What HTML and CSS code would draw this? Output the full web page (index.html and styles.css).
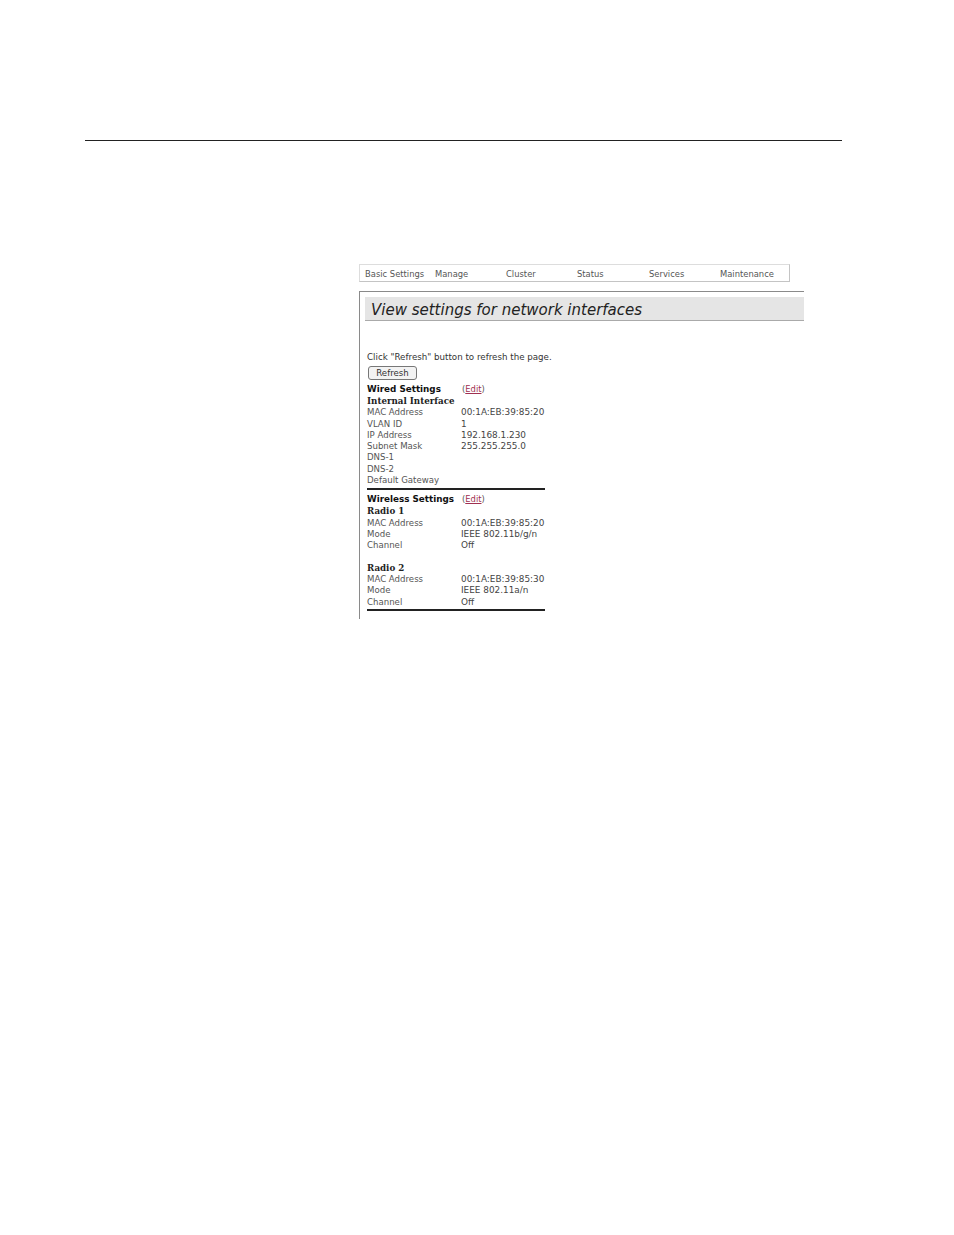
FILE: index.html
```html
<!DOCTYPE html>
<html lang="en">
<head>
<meta charset="utf-8">
<title>View settings for network interfaces</title>
<link rel="stylesheet" href="styles.css">
</head>
<body>
<div class="page">
  <hr class="rule">
  <div class="figure">
    <nav class="nav">
      <span class="nav-item w70">Basic Settings</span>
      <span class="nav-item w71">Manage</span>
      <span class="nav-item w71">Cluster</span>
      <span class="nav-item w72">Status</span>
      <span class="nav-item w71">Services</span>
      <span class="nav-item">Maintenance</span>
    </nav>
    <section class="panel">
      <h1 class="title">View settings for network interfaces</h1>
      <p class="hint">Click "Refresh" button to refresh the page.</p>
      <button class="btn" type="button">Refresh</button>
      <div class="block wired">
        <div class="row head"><b class="h">Wired Settings</b><span class="edit">(<a>Edit</a>)</span></div>
        <div class="row"><b class="sub">Internal Interface</b></div>
        <div class="row"><span>MAC Address</span><span>00:1A:EB:39:85:20</span></div>
        <div class="row"><span>VLAN ID</span><span>1</span></div>
        <div class="row"><span>IP Address</span><span>192.168.1.230</span></div>
        <div class="row"><span>Subnet Mask</span><span>255.255.255.0</span></div>
        <div class="row"><span>DNS-1</span></div>
        <div class="row"><span>DNS-2</span></div>
        <div class="row"><span>Default Gateway</span></div>
      </div>
      <div class="block wireless">
        <div class="row head"><b class="h">Wireless Settings</b><span class="edit">(<a>Edit</a>)</span></div>
        <div class="row"><b class="sub">Radio 1</b></div>
        <div class="row"><span>MAC Address</span><span>00:1A:EB:39:85:20</span></div>
        <div class="row"><span>Mode</span><span>IEEE 802.11b/g/n</span></div>
        <div class="row"><span>Channel</span><span>Off</span></div>
        <div class="row blank"></div>
        <div class="row"><b class="sub">Radio 2</b></div>
        <div class="row"><span>MAC Address</span><span>00:1A:EB:39:85:30</span></div>
        <div class="row"><span>Mode</span><span>IEEE 802.11a/n</span></div>
        <div class="row"><span>Channel</span><span>Off</span></div>
      </div>
    </section>
  </div>
</div>
</body>
</html>
```
FILE: styles.css
```css
html, body { margin: 0; padding: 0; background: #fff; }
.page { width: 954px; height: 1235px; padding-top: 140px; box-sizing: border-box; font-family: "DejaVu Sans", Verdana, sans-serif; color: #222; overflow: hidden; }
.rule { width: 757px; height: 1px; margin: 0 0 0 85px; border: 0; background: #222; }
.figure { margin: 123px 0 0 359px; width: 445px; }
.nav { display: flex; width: 431px; height: 18px; box-sizing: border-box; padding: 1px 0 0 5px; align-items: center; border: 1px solid #c4c4c4; border-left-color: #ddd; border-top-color: #ddd; font-size: 8.4px; color: #555; }
.w70 { width: 70px; }
.w71 { width: 71px; }
.w72 { width: 72px; }
.nav-item { white-space: nowrap; }
.panel { margin-top: 9px; height: 328px; box-sizing: border-box; border-top: 1px solid #8a8a8a; border-left: 1px solid #8a8a8a; padding: 5px 0 0 5px; }
.title { margin: 0; height: 24px; box-sizing: border-box; background: #e5e5e5; border-bottom: 1px solid #aaa; padding-left: 6px; font-size: 15px; line-height: 27px; font-weight: 400; font-style: italic; color: #222; white-space: nowrap; }
.hint { margin: 30px 0 0 2px; font-size: 8.7px; line-height: 12px; color: #333; white-space: nowrap; }
.btn { display: block; margin: 3px 0 0 3px; width: 49px; height: 14px; padding: 0; box-sizing: border-box; border: 1px solid #777; border-radius: 3px; background: #f3f3f3; font: 8.6px/12px "DejaVu Sans", sans-serif; color: #333; }
.block { width: 178px; margin-left: 2px; border-bottom: 2px solid #222; font-size: 8.6px; color: #555; }
.wired { margin-top: 4px; padding-bottom: 2px; }
.wireless { margin-top: 4px; padding-bottom: 1px; }
.row { display: grid; grid-template-columns: 94px 1fr; height: 11.3px; line-height: 11.3px; white-space: nowrap; }
.row span + span { color: #444; font-size: 8.9px; }
.head { height: 12px; }
.h { font-size: 8.8px; color: #111; }
.sub { font-size: 8.7px; color: #222; font-family: "DejaVu Serif", serif; }
.row .edit { color: #555; font-size: 8.4px; padding-left: 1px; }
.edit a { color: #a03050; text-decoration: underline; }
```
